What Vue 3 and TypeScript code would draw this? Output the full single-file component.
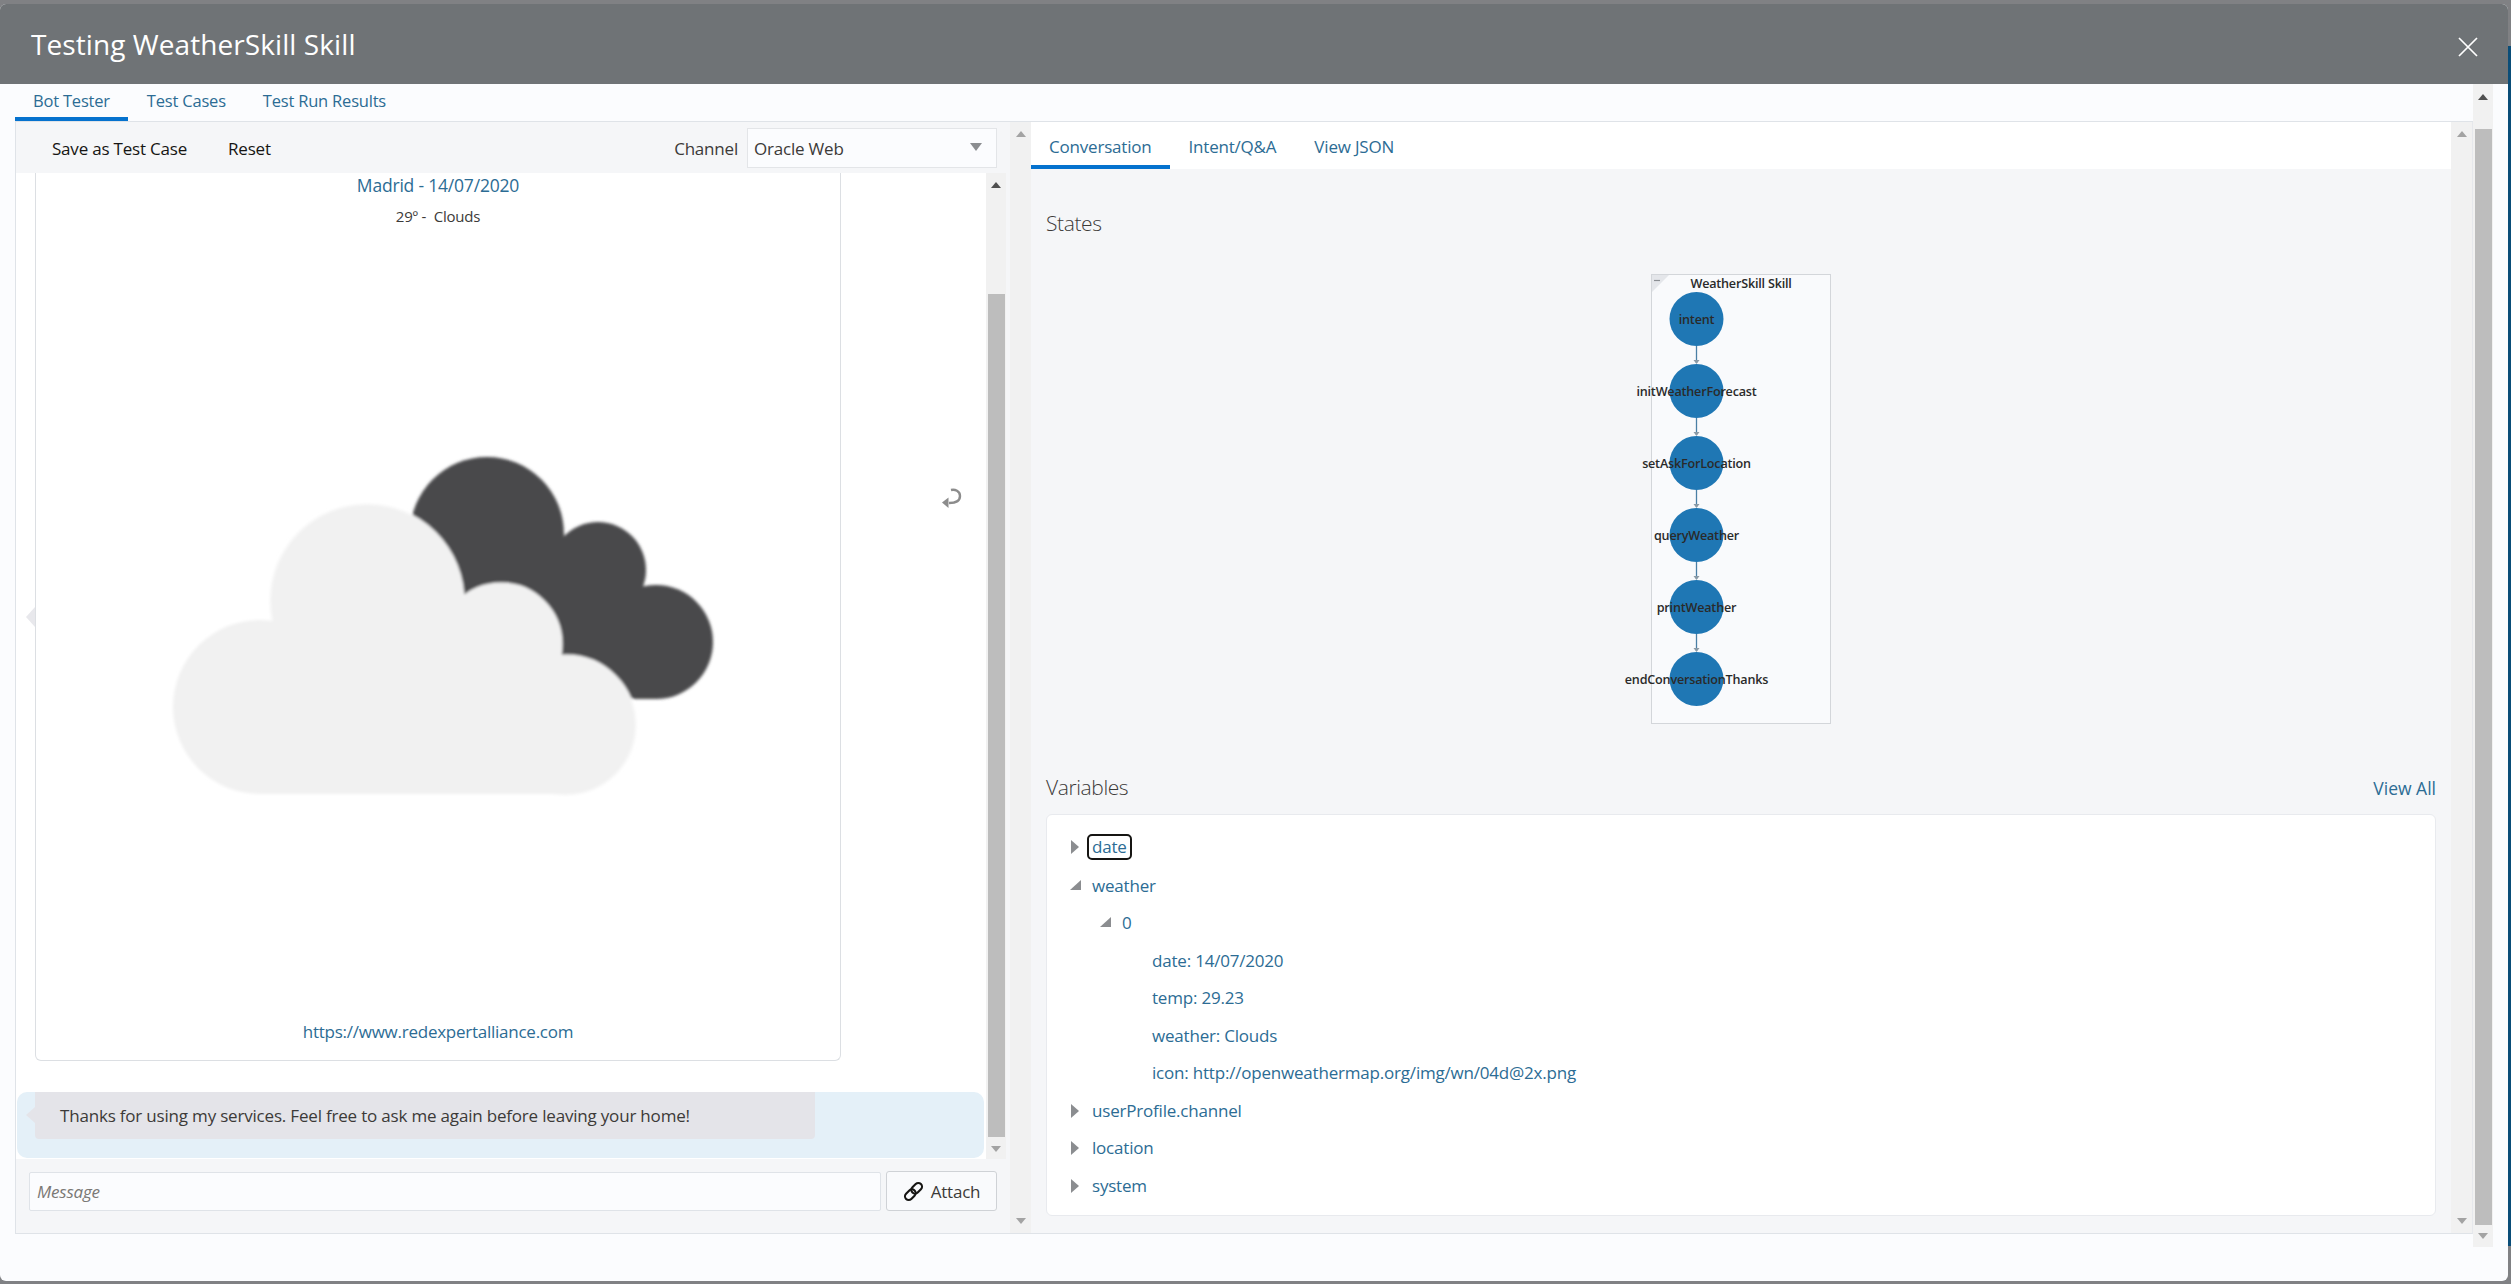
<script setup lang="ts">
const mainTabs = ['Bot Tester', 'Test Cases', 'Test Run Results']
const sideTabs = ['Conversation', 'Intent/Q&A', 'View JSON']

const states = [
  { name: 'intent', cy: 45 },
  { name: 'initWeatherForecast', cy: 117 },
  { name: 'setAskForLocation', cy: 189 },
  { name: 'queryWeather', cy: 261 },
  { name: 'printWeather', cy: 333 },
  { name: 'endConversationThanks', cy: 405 },
]

const rows = [
  { text: 'date', level: 0, arrow: 'closed', focus: true },
  { text: 'weather', level: 0, arrow: 'open' },
  { text: '0', level: 1, arrow: 'open' },
  { text: 'date: 14/07/2020', level: 2 },
  { text: 'temp: 29.23', level: 2 },
  { text: 'weather: Clouds', level: 2 },
  { text: 'icon: http://openweathermap.org/img/wn/04d@2x.png', level: 2 },
  { text: 'userProfile.channel', level: 0, arrow: 'closed' },
  { text: 'location', level: 0, arrow: 'closed' },
  { text: 'system', level: 0, arrow: 'closed' },
]
</script>

<template>
  <div class="page">
    <div class="edge"></div>
    <div class="modal">
      <header class="modal-head">
        <h1>Testing WeatherSkill Skill</h1>
        <svg class="close" width="20" height="20" viewBox="0 0 20 20">
          <path d="M1 1 L19 19 M19 1 L1 19" stroke="#fff" stroke-width="1.7" fill="none" />
        </svg>
      </header>

      <div class="modal-body">
        <div class="content">
          <nav class="main-tabs">
            <a v-for="(t, i) in mainTabs" :key="t" class="main-tab" :class="{ active: i === 0 }">{{ t }}</a>
          </nav>

          <div class="panes">
            <section class="left-pane">
              <div class="toolbar">
                <span class="tool">Save as Test Case</span>
                <span class="tool">Reset</span>
                <span class="spacer"></span>
                <span class="channel-label">Channel</span>
                <div class="select">
                  <span>Oracle Web</span>
                  <i class="select-arrow"></i>
                </div>
              </div>

              <div class="chat-wrap">
                <div class="chat">
                  <div class="card-row">
                    <div class="card">
                      <a class="card-title">Madrid - 14/07/2020</a>
                      <p class="card-sub">29º -&nbsp; Clouds</p>
                      <svg class="cloud" width="560" height="355" viewBox="160 445 560 355">
                        <defs>
                          <filter id="soft" x="-5%" y="-5%" width="110%" height="110%">
                            <feGaussianBlur stdDeviation="1.6" />
                          </filter>
                        </defs>
                        <g filter="url(#soft)">
                          <g fill="#4a4a4c">
                            <circle cx="486" cy="532" r="77" />
                            <circle cx="597" cy="568" r="48" />
                            <circle cx="655" cy="640" r="57" />
                            <path d="M412 510 L486 532 L597 568 L655 640 L655 697 L634 697 L560 680 L460 600 Z" />
                          </g>
                          <g fill="#f1f1f1" stroke="#f8f8f8" stroke-width="3">
                            <circle cx="366" cy="599" r="96" />
                            <circle cx="500" cy="642" r="60" />
                            <circle cx="565" cy="723" r="69" />
                          </g>
                          <g fill="#f1f1f1">
                            <circle cx="366" cy="599" r="96" />
                            <circle cx="259" cy="705" r="87" />
                            <circle cx="500" cy="642" r="60" />
                            <circle cx="565" cy="723" r="69" />
                            <rect x="259" y="660" width="306" height="132" />
                            <rect x="400" y="600" width="100" height="70" />
                          </g>
                        </g>
                      </svg>
                      <a class="card-link">https://www.redexpertalliance.com</a>
                    </div>
                    <svg class="undo" width="24" height="24" viewBox="0 0 24 24">
                      <path d="M11 3 C15 2 20 4 20 9 C20 14 16 16 9 16" fill="none" stroke="#8c8c8c" stroke-width="2.4" />
                      <path d="M2 15.5 L8.5 10.5 L8.5 21 Z" fill="#8c8c8c" />
                    </svg>
                  </div>
                  <div class="reply">
                    <div class="bubble">Thanks for using my services. Feel free to ask me again before leaving your home!</div>
                  </div>
                </div>
                <div class="scroll chat-scroll">
                  <i class="tri up dark"></i>
                  <div class="track"><div class="thumb"></div></div>
                  <i class="tri down"></i>
                </div>
              </div>
              <i class="pane-notch"></i>

              <div class="composer">
                <div class="message">Message</div>
                <button class="attach">
                  <svg width="21" height="21" viewBox="0 0 21 21" fill="none" stroke="#161513" stroke-width="2.1">
                    <g transform="rotate(-45 10.5 10.5)">
                      <rect x="0" y="6.8" width="12" height="7.4" rx="3.7" />
                      <rect x="9" y="6.8" width="12" height="7.4" rx="3.7" />
                    </g>
                  </svg>
                  Attach
                </button>
              </div>
            </section>

            <div class="scroll pane-scroll">
              <i class="tri up"></i>
              <span class="spacer"></span>
              <i class="tri down"></i>
            </div>

            <section class="right-pane">
              <nav class="side-tabs">
                <a v-for="(t, i) in sideTabs" :key="t" class="side-tab" :class="{ active: i === 0 }">{{ t }}</a>
              </nav>

              <div class="right-body">
                <h2 class="states-title">States</h2>

                <div class="diagram-wrap">
                  <svg class="diagram" width="300" height="452" viewBox="0 0 300 452">
                    <rect x="71.5" y="0.5" width="179" height="449" fill="#f9fafc" stroke="#d3d6da" />
                    <path d="M72 1 H89 L72 18 Z" fill="#e4e6ea" />
                    <path d="M74 6.5 H80" stroke="#8b8f94" stroke-width="1.2" />
                    <text x="161" y="14" text-anchor="middle" class="state-text">WeatherSkill Skill</text>
                    <g v-for="(s, i) in states" :key="s.name">
                      <g v-if="i < states.length - 1">
                        <path :d="`M116.5 ${s.cy + 27} V${s.cy + 44}`" stroke="#4a7fa5" stroke-width="1.3" />
                        <path :d="`M113.5 ${s.cy + 41} L119.5 ${s.cy + 41} L116.5 ${s.cy + 45} Z`" fill="#8a9aa6" />
                      </g>
                      <circle cx="116.5" :cy="s.cy" r="27" fill="#1f77b4" />
                      <text x="116.5" :y="s.cy + 5" text-anchor="middle" class="state-text">{{ s.name }}</text>
                    </g>
                  </svg>
                </div>

                <div class="vars-head">
                  <h2>Variables</h2>
                  <a class="view-all">View All</a>
                </div>

                <div class="vars">
                  <div v-for="r in rows" :key="r.text + r.level" class="row" :class="`lv${r.level}`">
                    <i v-if="r.arrow === 'closed'" class="caret closed"></i>
                    <i v-else-if="r.arrow === 'open'" class="caret open"></i>
                    <span class="row-text" :class="{ focus: r.focus }">{{ r.text }}</span>
                  </div>
                </div>
              </div>
            </section>

            <div class="scroll right-scroll">
              <i class="tri up"></i>
              <span class="spacer"></span>
              <i class="tri down"></i>
            </div>
          </div>
        </div>

        <div class="scroll outer-scroll">
          <i class="tri up dark"></i>
          <div class="track"><div class="thumb"></div></div>
          <i class="tri down"></i>
        </div>
      </div>
    </div>
  </div>
</template>

<style>
html, body {
  margin: 0;
  background: #808184;
  overflow: hidden;
}
</style>

<style scoped>
.page {
  position: relative;
  width: 2511px;
  height: 1284px;
  padding-top: 4px;
  box-sizing: border-box;
  background: #808184;
  font-family: "Open Sans", "Noto Sans", sans-serif;
  overflow: hidden;
}
.edge {
  position: absolute;
  right: 0;
  top: 46px;
  width: 3px;
  height: 1200px;
  background: #0a4d78;
}
.modal {
  width: 2508px;
  height: 1277px;
  display: flex;
  flex-direction: column;
  background: #fbfcfe;
  border-radius: 6px;
  overflow: hidden;
}
.modal-head {
  height: 80px;
  flex: none;
  display: flex;
  align-items: center;
  justify-content: space-between;
  padding: 0 30px 0 31px;
  box-sizing: border-box;
  background: #6f7376;
}
.modal-head h1 {
  margin: 0;
  color: #fff;
  font-size: 28px;
  font-weight: 400;
  letter-spacing: 0.08px;
}
.close {
  margin-top: 5px;
}
.modal-body {
  flex: 1;
  display: flex;
  align-items: flex-start;
}
.content {
  width: 2473px;
  padding-left: 15px;
  box-sizing: border-box;
  flex: none;
}
.main-tabs {
  height: 38px;
  display: flex;
  box-sizing: border-box;
  border-bottom: 1px solid #dfe3e8;
}
.main-tab {
  height: 37px;
  box-sizing: border-box;
  padding: 5px 18px 0;
  margin-right: 1px;
  color: #2c6c94;
  font-size: 16.5px;
  letter-spacing: -0.2px;
}
.main-tab.active {
  border-bottom: 4px solid #0572ce;
}
.panes {
  height: 1112px;
  display: flex;
  box-sizing: border-box;
  border-bottom: 1px solid #dfe3e8;
  border-left: 1px solid #dfe3e8;
  border-right: 1px solid #e6e8ec;
}
.left-pane {
  position: relative;
  width: 994px;
  flex: none;
  display: flex;
  flex-direction: column;
  background: #f5f6f8;
}
.toolbar {
  height: 51px;
  flex: none;
  display: flex;
  align-items: center;
  padding: 2px 13px 0 36px;
  box-sizing: border-box;
  color: #161513;
  font-size: 17px;
  letter-spacing: -0.2px;
}
.tool {
  margin-right: 41px;
}
.spacer {
  flex: 1;
}
.channel-label {
  color: #3c3a38;
  margin-right: 9px;
}
.select {
  width: 250px;
  height: 40px;
  margin-top: -2px;
  box-sizing: border-box;
  display: flex;
  align-items: center;
  justify-content: space-between;
  padding: 2px 14px 0 6px;
  background: #fbfcfe;
  border: 1px solid #e3e5e8;
  color: #3c3a38;
}
.select-arrow {
  width: 0;
  height: 0;
  margin-top: -3px;
  border-left: 6px solid transparent;
  border-right: 6px solid transparent;
  border-top: 8px solid #8b8d90;
}
.chat-wrap {
  display: flex;
  height: 986px;
  flex: none;
}
.chat {
  width: 970px;
  flex: none;
  display: flex;
  flex-direction: column;
  background: #fff;
}
.card-row {
  display: flex;
  height: 888px;
  padding-left: 19px;
  flex: none;
}
.card {
  width: 806px;
  height: 888px;
  box-sizing: border-box;
  flex: none;
  display: flex;
  flex-direction: column;
  align-items: center;
  border: 1px solid #dcdfe3;
  border-top: 0;
  border-radius: 0 0 6px 6px;
}
.card-title {
  margin-top: 0;
  color: #2c6c94;
  font-size: 17.5px;
  letter-spacing: -0.2px;
}
.card-sub {
  margin: 9px 0 0;
  color: #3c3a38;
  font-size: 15px;
  letter-spacing: -0.2px;
}
.cloud {
  margin: 221px 0 0 5px;
  flex: none;
}
.card-link {
  margin-top: auto;
  margin-bottom: 17px;
  color: #2c6c94;
  font-size: 17px;
  letter-spacing: -0.25px;
}
.undo {
  margin: 314px 0 0 99px;
  flex: none;
}
.reply {
  flex: none;
  height: 66px;
  margin: 31px 0 0 1px;
  width: 967px;
  background: #e4f0f8;
  border-radius: 10px;
  padding-left: 18px;
  box-sizing: border-box;
}
.bubble {
  position: relative;
  width: 780px;
  height: 47px;
  box-sizing: border-box;
  padding-left: 25px;
  line-height: 47px;
  background: #e4e4e9;
  border-radius: 0 0 4px 4px;
  color: #3c3a38;
  font-size: 17px;
  letter-spacing: -0.19px;
}
.bubble::before {
  content: '';
  position: absolute;
  left: -9px;
  top: 15px;
  border: 8px solid transparent;
  border-left: 0;
  border-right: 9px solid #e4e4e9;
}
.pane-notch {
  position: absolute;
  left: 10px;
  top: 485px;
  width: 0;
  height: 0;
  border: 10px solid transparent;
  border-left: 0;
  border-right: 9px solid #e8e8ec;
}
.scroll {
  flex: none;
  display: flex;
  flex-direction: column;
  align-items: center;
  box-sizing: border-box;
  background: #f1f1f1;
}
.chat-scroll {
  width: 20px;
  padding: 9px 0 7px;
  height: 986px;
}
.track {
  flex: 1;
  width: 100%;
  display: flex;
  justify-content: center;
}
.chat-scroll .thumb {
  width: 17px;
  margin-top: 106px;
  height: 843px;
  background: #bdbdbd;
}
.composer {
  display: flex;
  align-items: center;
  gap: 5px;
  padding: 12px 13px 0 13px;
}
.message {
  width: 852px;
  height: 39px;
  box-sizing: border-box;
  padding-left: 7px;
  line-height: 37px;
  background: #fbfcfe;
  border: 1px solid #dfe3e8;
  border-radius: 2px;
  color: #7a7875;
  font-size: 17px;
  font-style: italic;
  letter-spacing: -0.2px;
}
.attach {
  width: 111px;
  height: 40px;
  box-sizing: border-box;
  display: flex;
  align-items: center;
  justify-content: center;
  gap: 7px;
  padding: 0;
  background: #f9fafc;
  border: 1px solid #cfd2d6;
  border-radius: 3px;
  color: #3c3a38;
  font-family: inherit;
  font-size: 17px;
  letter-spacing: -0.2px;
}
.pane-scroll,
.right-scroll {
  width: 21px;
  height: 1111px;
  padding: 9px 0;
}
.right-pane {
  width: 1420px;
  flex: none;
  display: flex;
  flex-direction: column;
  background: #f5f6f8;
}
.side-tabs {
  height: 47px;
  flex: none;
  display: flex;
  background: #fff;
}
.side-tab {
  height: 47px;
  box-sizing: border-box;
  padding: 13px 18px 0;
  margin-right: 2px;
  color: #2c6c94;
  font-size: 17px;
  letter-spacing: -0.2px;
}
.side-tab.active {
  border-bottom: 4px solid #0572ce;
  margin-right: 1px;
}
.right-body {
  flex: 1;
  padding: 0 15px;
  display: flex;
  flex-direction: column;
}
.states-title {
  margin: 40px 0 0;
  color: #3c3a38;
  font-size: 21px;
  font-weight: 300;
  letter-spacing: -0.4px;
}
.diagram-wrap {
  margin-top: 37px;
  height: 452px;
  padding-left: 534px;
  flex: none;
}
.state-text {
  font-family: "Open Sans", "Noto Sans", sans-serif;
  font-size: 12.6px;
  font-weight: 600;
  fill: #2a2a2a;
  letter-spacing: -0.2px;
}
.vars-head {
  margin-top: 47px;
  display: flex;
  align-items: baseline;
  justify-content: space-between;
}
.vars-head h2 {
  margin: 0;
  color: #3c3a38;
  font-size: 21px;
  font-weight: 300;
  letter-spacing: -0.4px;
}
.view-all {
  color: #2c6c94;
  font-size: 17.5px;
  letter-spacing: 0;
}
.vars {
  margin-top: 13px;
  height: 402px;
  box-sizing: border-box;
  padding: 13px 0 0;
  background: #fff;
  border: 1px solid #e8eaee;
  border-radius: 6px;
}
.row {
  position: relative;
  height: 37.5px;
  display: flex;
  align-items: center;
  color: #2c6c94;
  font-size: 17px;
  letter-spacing: -0.2px;
}
.row:first-child {
  height: 38.5px;
}
.lv0 { padding-left: 45px; }
.lv1 { padding-left: 75px; }
.lv2 { padding-left: 105px; }
.row-text.focus {
  outline: 2px solid #161513;
  outline-offset: 0;
  border-radius: 3px;
  padding: 0 3px;
  margin-left: -3px;
  line-height: 22px;
}
.caret {
  position: absolute;
  width: 0;
  height: 0;
}
.caret.closed {
  left: 24px;
  top: 12px;
  border-top: 7px solid transparent;
  border-bottom: 7px solid transparent;
  border-left: 8px solid #8b8d90;
}
.caret.open {
  left: 23px;
  top: 13px;
  border-bottom: 10px solid #8b8d90;
  border-left: 11px solid transparent;
}
.lv1 .caret.open {
  left: 53px;
}
.tri {
  width: 0;
  height: 0;
  flex: none;
  border-left: 5px solid transparent;
  border-right: 5px solid transparent;
}
.tri.up {
  border-bottom: 6px solid #a3a3a3;
}
.tri.up.dark {
  border-bottom-color: #505050;
}
.tri.down {
  border-top: 6px solid #a3a3a3;
}
.outer-scroll {
  width: 20px;
  height: 1163px;
  padding: 10px 0 8px;
}
.outer-scroll .thumb {
  width: 17px;
  height: 1096px;
  margin-top: 29px;
  background: #bdbdbd;
}
</style>
